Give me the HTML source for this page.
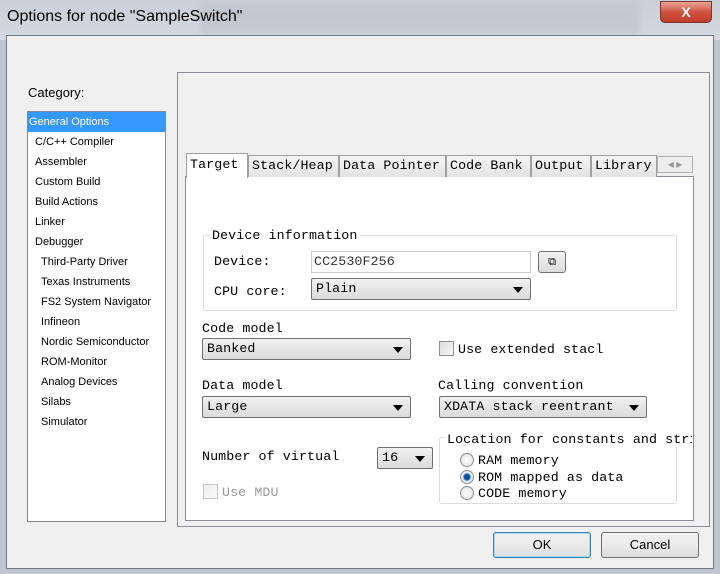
<!DOCTYPE html>
<html><head><style>
*{margin:0;padding:0;box-sizing:border-box}
body{width:720px;height:574px;position:relative;overflow:hidden;background:#bfc6cf;font-family:"Liberation Sans",sans-serif;font-size:11px;color:#000}
.a{position:absolute}
.m{font-family:"Liberation Mono","Noto Sans CJK SC",monospace;font-size:13.3px;letter-spacing:0.1px;white-space:nowrap}
.combo{position:absolute;height:22px;border:1px solid #707070;border-radius:2px;background:linear-gradient(#f2f2f2,#e5e5e5 50%,#dcdcdc);padding:2px 4px}
.combo:after{content:"";position:absolute;right:7px;top:8px;border-left:5px solid transparent;border-right:5px solid transparent;border-top:6px solid #000}
.tab{position:absolute;top:155px;height:22px;border:1px solid #a0a0a0;border-bottom:none;background:linear-gradient(#f5f5f5,#e3e3e3);padding:2px 3px}
.cb{position:absolute;width:15px;height:15px;border:1px solid #8e8f8f;background:linear-gradient(135deg,#dcdcdc,#f8f8f8)}
.rb{position:absolute;width:14px;height:14px;border-radius:50%;border:1px solid #8e8f8f;background:radial-gradient(#fff,#ddd)}
.li{position:absolute;left:35px;font-size:11px}
.btn{position:absolute;height:26px;border:1px solid #707070;border-radius:3px;background:linear-gradient(#f2f2f2,#ebebeb 50%,#dddddd);text-align:center;line-height:24px;font-size:13px}
</style></head><body>
<div class="a" style="left:0;top:0;width:720px;height:40px;background:linear-gradient(#c9d0d8,#d4d9de)"></div>
<div class="a" style="left:200px;top:4px;width:440px;height:30px;background:#b8bcc2;opacity:.5;filter:blur(4px)"></div>
<div class="a" style="left:7px;top:8px;font-size:16px;color:#000">Options for node "SampleSwitch"</div>
<div class="a" style="left:660px;top:1px;width:52px;height:22px;border:1px solid #7a3530;border-radius:0 0 5px 5px;background:linear-gradient(#e8a596,#d0533f 50%,#c23a28);color:#fff;text-align:center;font-weight:bold;font-size:14px;line-height:20px">X</div>
<div class="a" style="left:6px;top:35px;width:708px;height:534px;background:#f0f0f0;border:1px solid #6d7a88"></div>
<div class="a" style="left:28px;top:85px;font-size:13px">Category:</div>
<div class="a" style="left:27px;top:111px;width:139px;height:411px;background:#fff;border:1px solid #828790"></div>
<div class="a" style="left:28px;top:112px;width:137px;height:20px;background:#3399ff"></div>
<div class="a" style="left:29px;top:116px;color:#fff">General Options</div>
<div class="li" style="top:136px">C/C++ Compiler</div>
<div class="li" style="top:156px">Assembler</div>
<div class="li" style="top:176px">Custom Build</div>
<div class="li" style="top:196px">Build Actions</div>
<div class="li" style="top:216px">Linker</div>
<div class="li" style="top:236px">Debugger</div>
<div class="li" style="top:256px;left:41px">Third-Party Driver</div>
<div class="li" style="top:276px;left:41px">Texas Instruments</div>
<div class="li" style="top:296px;left:41px">FS2 System Navigator</div>
<div class="li" style="top:316px;left:41px">Infineon</div>
<div class="li" style="top:336px;left:41px">Nordic Semiconductor</div>
<div class="li" style="top:356px;left:41px">ROM-Monitor</div>
<div class="li" style="top:376px;left:41px">Analog Devices</div>
<div class="li" style="top:396px;left:41px">Silabs</div>
<div class="li" style="top:416px;left:41px">Simulator</div>
<div class="a" style="left:177px;top:72px;width:533px;height:455px;border:1px solid #898c95"></div>
<div class="a" style="left:185px;top:176px;width:509px;height:345px;background:#fff;border:1px solid #898c95"></div>
<div class="tab m" style="left:248px;width:91px">Stack/Heap</div>
<div class="tab m" style="left:339px;width:107px">Data Pointer</div>
<div class="tab m" style="left:446px;width:85px">Code Bank</div>
<div class="tab m" style="left:531px;width:60px">Output</div>
<div class="tab m" style="left:591px;width:66px">Library</div>
<div class="tab m" style="left:186px;top:153px;height:25px;width:62px;background:#fff;padding-top:3px">Target</div>
<div class="a" style="left:657px;top:156px;width:36px;height:17px;border:1px solid #b0b0b0;background:#eee;font-size:8px;color:#999;text-align:center;line-height:15px">◀ ▶</div>
<div class="a" style="left:203px;top:235px;width:474px;height:76px;border:1px solid #dcdcdc;border-radius:3px"></div>
<div class="a m" style="left:209px;top:228px;background:#fff;padding:0 3px">Device information</div>
<div class="a m" style="left:214px;top:254px">Device:</div>
<div class="a m" style="left:311px;top:251px;width:220px;height:22px;border:1px solid #ccc;padding:2px 2px;color:#333">CC2530F256</div>
<div class="a" style="left:538px;top:251px;width:28px;height:22px;border:1px solid #707070;border-radius:3px;background:linear-gradient(#f2f2f2,#dcdcdc);font-size:11px;text-align:center;line-height:20px">⧉</div>
<div class="a m" style="left:214px;top:284px">CPU core:</div>
<div class="combo m" style="left:311px;top:278px;width:220px">Plain</div>
<div class="a m" style="left:202px;top:321px">Code model</div>
<div class="combo m" style="left:202px;top:338px;width:209px">Banked</div>
<div class="cb" style="left:439px;top:341px"></div>
<div class="a m" style="left:458px;top:342px">Use extended stacl</div>
<div class="a m" style="left:202px;top:378px">Data model</div>
<div class="combo m" style="left:202px;top:396px;width:209px">Large</div>
<div class="a m" style="left:438px;top:378px">Calling convention</div>
<div class="combo m" style="left:439px;top:396px;width:208px">XDATA stack reentrant</div>
<div class="a m" style="left:202px;top:449px">Number of virtual</div>
<div class="combo m" style="left:377px;top:447px;width:56px">16</div>
<div class="cb" style="left:203px;top:484px;opacity:.5"></div>
<div class="a m" style="left:222px;top:485px;color:#999">Use MDU</div>
<div class="a" style="left:439px;top:437px;width:238px;height:67px;border:1px solid #dcdcdc;border-radius:3px"></div>
<div class="a m" style="left:445px;top:432px;background:#fff;padding:0 2px;width:247px;overflow:hidden">Location for constants and stri</div>
<div class="rb" style="left:460px;top:453px"></div>
<div class="a m" style="left:478px;top:453px">RAM memory</div>
<div class="rb" style="left:460px;top:470px;background:radial-gradient(#0b4d9c 2.5px,#5aa0e0 3.5px,#eee 4.5px)"></div>
<div class="a m" style="left:478px;top:470px">ROM mapped as data</div>
<div class="rb" style="left:460px;top:486px"></div>
<div class="a m" style="left:478px;top:486px">CODE memory</div>
<div class="btn" style="left:493px;top:532px;width:98px;border-color:#3c7fb1;box-shadow:inset 0 0 0 1px #a0dcf5">OK</div>
<div class="btn" style="left:601px;top:532px;width:98px">Cancel</div>
</body></html>
